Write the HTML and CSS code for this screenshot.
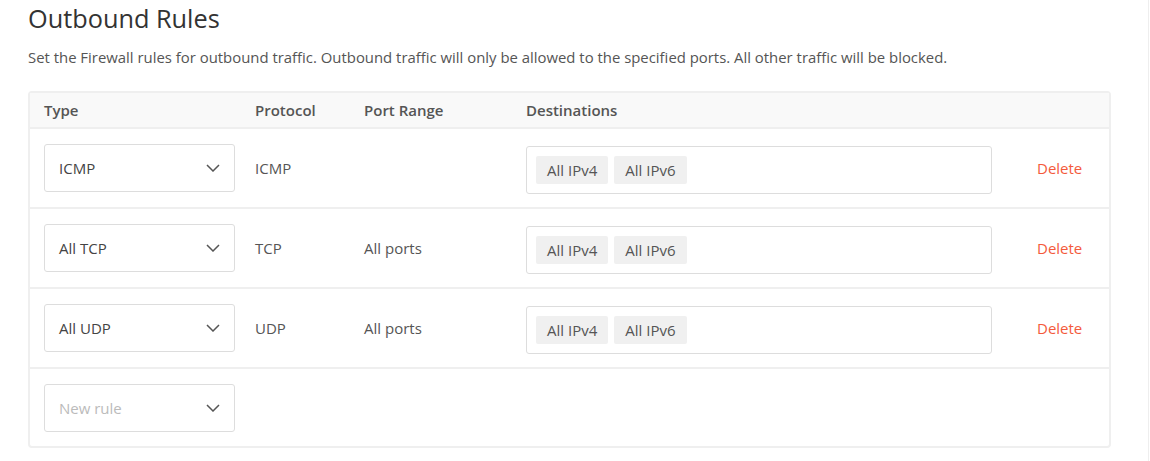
FILE: index.html
```html
<!DOCTYPE html>
<html lang="en">
<head>
  <meta charset="UTF-8">
  <meta name="viewport" content="width=device-width, initial-scale=1.0">
  <title>Outbound Rules</title>
  <link rel="stylesheet" href="styles.css">
</head>
<body>
  <div class="page">
    <h1 class="title">Outbound Rules</h1>
    <p class="intro">Set the Firewall rules for outbound traffic. Outbound traffic will only be allowed to the specified ports. All other traffic will be blocked.</p>

    <div class="rules">
      <div class="row head">
        <div class="col-type">Type</div>
        <div class="col-proto">Protocol</div>
        <div class="col-port">Port Range</div>
        <div class="col-dest">Destinations</div>
      </div>

      <div class="row">
        <div class="col-type">
          <div class="select"><span>ICMP</span><svg class="chev" width="14" height="8" viewBox="0 0 14 8"><path d="M1 1l6 6 6-6" fill="none" stroke="#555" stroke-width="1.5"/></svg></div>
        </div>
        <div class="col-proto">ICMP</div>
        <div class="col-port"></div>
        <div class="col-dest">
          <div class="dest-box"><span class="chip">All IPv4</span><span class="chip">All IPv6</span></div>
        </div>
        <div class="col-action"><a class="delete">Delete</a></div>
      </div>

      <div class="row">
        <div class="col-type">
          <div class="select"><span>All TCP</span><svg class="chev" width="14" height="8" viewBox="0 0 14 8"><path d="M1 1l6 6 6-6" fill="none" stroke="#555" stroke-width="1.5"/></svg></div>
        </div>
        <div class="col-proto">TCP</div>
        <div class="col-port">All ports</div>
        <div class="col-dest">
          <div class="dest-box"><span class="chip">All IPv4</span><span class="chip">All IPv6</span></div>
        </div>
        <div class="col-action"><a class="delete">Delete</a></div>
      </div>

      <div class="row">
        <div class="col-type">
          <div class="select"><span>All UDP</span><svg class="chev" width="14" height="8" viewBox="0 0 14 8"><path d="M1 1l6 6 6-6" fill="none" stroke="#555" stroke-width="1.5"/></svg></div>
        </div>
        <div class="col-proto">UDP</div>
        <div class="col-port">All ports</div>
        <div class="col-dest">
          <div class="dest-box"><span class="chip">All IPv4</span><span class="chip">All IPv6</span></div>
        </div>
        <div class="col-action"><a class="delete">Delete</a></div>
      </div>

      <div class="row last">
        <div class="col-type">
          <div class="select placeholder"><span>New rule</span><svg class="chev" width="14" height="8" viewBox="0 0 14 8"><path d="M1 1l6 6 6-6" fill="none" stroke="#555" stroke-width="1.5"/></svg></div>
        </div>
      </div>
    </div>
  </div>
</body>
</html>
```

FILE: styles.css
```css
body {
  margin: 0;
  font-family: "Open Sans", "Liberation Sans", sans-serif;
  color: #555;
  background: #fff;
}
.page {
  width: 1149px;
  height: 461px;
  box-sizing: border-box;
  border-right: 1px solid #eee;
  padding: 0 39px 0 28px;
}
.title {
  margin: 0;
  padding-top: 2px;
  font-size: 25.3px;
  font-weight: 400;
  line-height: 32px;
  color: #333;
}
.intro {
  margin: 12px 0 0;
  font-size: 14.9px;
  line-height: 22px;
  color: #555;
}
.rules {
  margin-top: 23px;
  border: 2px solid #efefef;
  border-radius: 4px;
  width: 1083px;
  box-sizing: border-box;
}
.row {
  display: flex;
  align-items: center;
  height: 80px;
  border-top: 2px solid #efefef;
  box-sizing: border-box;
  padding-left: 14px;
  font-size: 15px;
}
.row.head {
  height: 34px;
  border-top: none;
  background: #f9f9f9;
  font-weight: 600;
}
.row.last {
  height: 79px;
}
.col-type {
  width: 211px;
}
.col-proto {
  width: 109px;
}
.col-port {
  width: 162px;
}
.col-dest {
  width: 511px;
}
.col-action {
  flex: 1;
}
.select {
  width: 191px;
  height: 48px;
  box-sizing: border-box;
  border: 1px solid #ddd;
  border-radius: 3px;
  display: flex;
  align-items: center;
  justify-content: space-between;
  padding: 0 14px 0 14px;
  color: #444;
}
.select.placeholder span {
  color: #bbb;
}
.chev {
  display: block;
}
.dest-box {
  width: 466px;
  height: 48px;
  margin-top: 4px;
  box-sizing: border-box;
  border: 1px solid #ddd;
  border-radius: 3px;
  display: flex;
  align-items: center;
  gap: 6px;
  padding: 0 9px;
}
.chip {
  background: #f0f0f0;
  border-radius: 2px;
  padding: 0 11px;
  height: 28px;
  line-height: 28px;
  font-size: 15px;
  color: #555;
}
.delete {
  color: #f45a3c;
  font-size: 15px;
  cursor: pointer;
}
```
